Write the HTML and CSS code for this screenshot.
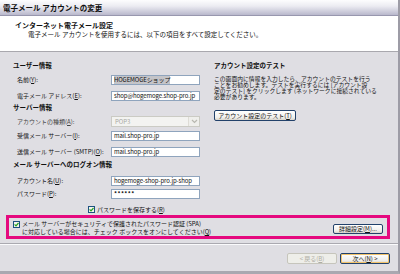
FILE: index.html
```html
<!DOCTYPE html>
<html lang="ja">
<head>
    <meta charset="UTF-8">
    <title>電子メール アカウントの変更</title>
    <link rel="stylesheet" href="styles.css">
</head>
<body>
    <div class="dialog">
        <div class="titlebar">電子メール アカウントの変更</div>

        <div class="banner">
            <h1>インターネット電子メール設定</h1>
            <p>電子メール アカウントを使用するには、以下の項目をすべて設定してください。</p>
        </div>

        <div class="content">
            <div class="columns">
                <div class="left">
                    <h2 class="group">ユーザー情報</h2>
                    <div class="row r-name">
                        <label>名前(<u>Y</u>):</label>
                        <div class="field"><span class="sel">HOGEMOGEショップ</span></div>
                    </div>
                    <div class="row r-mail">
                        <label>電子メール アドレス(<u>E</u>):</label>
                        <div class="field">shop@hogemoge.shop-pro.jp</div>
                    </div>

                    <h2 class="group g-server">サーバー情報</h2>
                    <div class="row r-type">
                        <label class="dim">アカウントの種類(<u>A</u>):</label>
                        <div class="select">
                            <span>POP3</span>
                            <span class="arrow">
                                <svg width="7" height="5" viewBox="0 0 7 5"><path d="M1 1 L3.5 3.5 L6 1" fill="none" stroke="#b8b8b0" stroke-width="1.2"/></svg>
                            </span>
                        </div>
                    </div>
                    <div class="row r-in">
                        <label>受信メール サーバー(<u>I</u>):</label>
                        <div class="field">mail.shop-pro.jp</div>
                    </div>
                    <div class="row r-out">
                        <label>送信メール サーバー (SMTP)(<u>O</u>):</label>
                        <div class="field">mail.shop-pro.jp</div>
                    </div>

                    <h2 class="group g-logon">メール サーバーへのログオン情報</h2>
                    <div class="row r-account">
                        <label>アカウント名(<u>U</u>):</label>
                        <div class="field">hogemoge-shop-pro.jp-shop</div>
                    </div>
                    <div class="row r-pass">
                        <label>パスワード(<u>P</u>):</label>
                        <div class="field pass">******</div>
                    </div>
                    <div class="save">
                        <svg class="check" width="7" height="7" viewBox="0 0 7 7"><rect x="0.5" y="0.5" width="6" height="6" fill="#f4f4ee" stroke="#1c5180"/><path d="M1.6 3.4 L3 4.8 L5.5 2" fill="none" stroke="#21a121" stroke-width="1.2"/></svg>
                        <span>パスワードを保存する(<u>R</u>)</span>
                    </div>
                </div>

                <div class="right">
                    <h2 class="group">アカウント設定のテスト</h2>
                    <p class="note">この画面内に情報を入力したら、アカウントのテストを行う<br>ことをお勧めします。テストを実行するには [アカウント設<br>定のテスト] をクリックします (ネットワークに接続されている<br>必要があります。</p>
                    <button class="btn test">アカウント設定のテスト(<u>T</u>)</button>
                </div>
            </div>

            <div class="spa">
                <svg class="check" width="7" height="7" viewBox="0 0 7 7"><rect x="0.5" y="0.5" width="6" height="6" fill="#f4f4ee" stroke="#1c5180"/><path d="M1.6 3.4 L3 4.8 L5.5 2" fill="none" stroke="#21a121" stroke-width="1.2"/></svg>
                <p>メール サーバーがセキュリティで保護されたパスワード認証 (SPA)<br>に対応している場合には、チェック ボックスをオンにしてください(<u>Q</u>)</p>
                <button class="btn more">詳細設定(<u>M</u>)...</button>
            </div>
        </div>

        <div class="footer">
            <button class="btn disabled">&lt; 戻る(<u>B</u>)</button>
            <button class="btn default">次へ(<u>N</u>) &gt;</button>
        </div>
    </div>
</body>
</html>
```

FILE: styles.css
```css
* {
    margin: 0;
    padding: 0;
    box-sizing: border-box;
}

body {
    font-family: "Noto Sans CJK JP", "Noto Sans", sans-serif;
    font-size: 6px;
    color: #111;
    background: #dfdee3;
    width: 400px;
    height: 274px;
    overflow: hidden;
}

u {
    text-decoration: underline;
}

.dialog {
    width: 400px;
    height: 274px;
    display: flex;
    flex-direction: column;
    background: #dfdee3;
    border-right: 2px solid #9d9ca6;
    border-bottom: 3px solid #a9a8b0;
}

.titlebar {
    height: 16px;
    padding-left: 3px;
    font-size: 7.5px;
    font-weight: bold;
    line-height: 15px;
    background: linear-gradient(#fdfdfe, #ececf2 40%, #b9b8cc);
    border-bottom: 1px solid #9897ae;
}

.banner {
    height: 36px;
    padding: 5px 0 0 15px;
    background: #fff;
    border-bottom: 1px solid #a9a8ae;
}

.banner h1 {
    font-size: 7px;
    line-height: 9px;
}

.banner p {
    font-size: 6.5px;
    line-height: 9px;
    padding-left: 13px;
}

.content {
    flex: 1;
    border-bottom: 1px solid #aaa9b0;
    box-shadow: 0 1px 0 #fafafc;
}

.columns {
    display: grid;
    grid-template-columns: 214px 1fr;
    height: 163px;
    padding-top: 8px;
}

.left {
    padding-left: 13px;
    display: flex;
    flex-direction: column;
}

.group {
    font-size: 6.5px;
    font-weight: bold;
    line-height: 10px;
    height: 10px;
}

.row {
    display: grid;
    grid-template-columns: 98px 89px;
    align-items: center;
    height: 10px;
}

.row label {
    padding-left: 4px;
    white-space: nowrap;
    line-height: 10px;
}

.r-name { margin-top: 5px; }
.r-mail { margin-top: 6px; }
.g-server { margin-top: 1px; }
.r-type { margin-top: 4px; height: 11px; }
.r-in { margin-top: 4px; }
.r-out { margin-top: 6px; }
.g-logon { margin-top: 2px; }
.r-account { margin-top: 7px; }
.r-pass { margin-top: 3px; }

.dim {
    color: #444;
}

.field {
    height: 10px;
    padding-left: 2px;
    line-height: 8px;
    background: #fff;
    border: 1px solid #8fa4bd;
    white-space: nowrap;
    overflow: hidden;
    letter-spacing: -0.1px;
}

.sel {
    background: #c4c4c8;
}

.pass {
    font-weight: bold;
    letter-spacing: 0.4px;
}

.select {
    height: 11px;
    display: flex;
    align-items: center;
    justify-content: space-between;
    padding-left: 3px;
    color: #a8a8a4;
    background: #f3f3f1;
    border: 1px solid #cbcbc4;
}

.select .arrow {
    width: 11px;
    height: 9px;
    display: flex;
    align-items: center;
    justify-content: center;
    background: #efefec;
    border-left: 1px solid #dedcd6;
}

.save {
    display: flex;
    align-items: center;
    gap: 2px;
    height: 10px;
    margin-top: 5px;
    padding-left: 75px;
}

.check {
    flex-shrink: 0;
    display: block;
}

.right {
    display: flex;
    flex-direction: column;
    align-items: flex-start;
}

.note {
    margin-top: 6px;
    font-size: 5.8px;
    line-height: 6px;
    white-space: nowrap;
}

.btn {
    font-family: inherit;
    font-size: 6px;
    color: #111;
    height: 11px;
    line-height: 9px;
    border: 1px solid #22416a;
    border-radius: 2px;
    background: linear-gradient(#ffffff, #f1f0ec 70%, #d9d5cc);
    white-space: nowrap;
}

.test {
    margin-top: 10px;
    width: 82px;
}

.spa {
    display: flex;
    align-items: flex-start;
    width: 384px;
    height: 24px;
    margin-left: 6px;
    padding: 3px 4px 2px 4px;
    border: 3px solid #e5097f;
}

.spa p {
    flex: 1;
    margin-left: 2px;
    margin-top: -1.5px;
    line-height: 8.5px;
    white-space: nowrap;
}

.more {
    align-self: flex-end;
    width: 50px;
    height: 10px;
    line-height: 8px;
}

.footer {
    display: flex;
    justify-content: flex-end;
    gap: 3px;
    padding: 9px 8px 0 0;
    height: 27px;
}

.disabled {
    width: 50px;
    color: #aeada4;
    border-color: #c6c5bc;
    background: #eeeee9;
}

.default {
    width: 50px;
    box-shadow: inset 0 0 0 1px #f2c36b;
}
```
